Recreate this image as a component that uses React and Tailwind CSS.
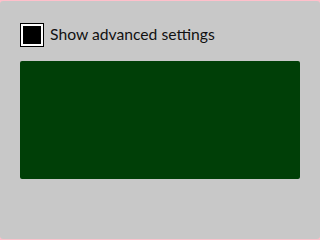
export default function App() {
  return (
    <div className="w-[320px] h-[240px] bg-[#ffc0cb] pt-px" style={{ fontFamily: 'Lato, "Noto Sans", sans-serif' }}>
      <div className="h-[238px] bg-[#c8c8c8] rounded-[3px] px-5 pt-[22px]">
        <label className="flex items-center gap-[6px] h-6">
          <span className="w-6 h-6 border border-black bg-white p-[2px] shrink-0">
            <span className="block w-full h-full bg-black" />
          </span>
          <span className="text-[15.7px] text-[#111] leading-none">Show advanced settings</span>
        </label>
        <div className="mt-[14px] h-[118px] bg-[#003f07] rounded-[2px]" />
      </div>
    </div>
  )
}
